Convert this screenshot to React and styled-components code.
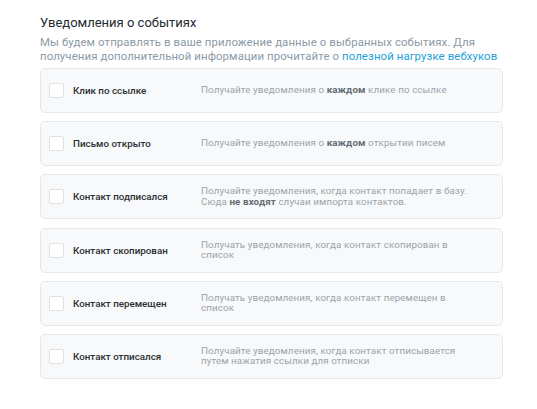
import React from "react";
import styled, { createGlobalStyle } from "styled-components";

const Global = createGlobalStyle`
  html, body { margin: 0; padding: 0; background: #ffffff; }
  body { font-family: Roboto, "Noto Sans", Arial, sans-serif; -webkit-font-smoothing: antialiased; }
`;

const Page = styled.div`
  width: 463px;
  padding: 15px 0 0 40px;
`;

const Title = styled.h2`
  margin: 0;
  font-size: 13px;
  font-weight: 400;
  color: #222a30;
  line-height: 16px;
`;

const Intro = styled.p`
  margin: 5px 0 5px;
  font-size: 11.4px;
  line-height: 13.5px;
  color: #8b9aa6;
  letter-spacing: 0.1px;
`;

const Link = styled.a`
  color: #1ea0d6;
  text-decoration: none;
`;

const List = styled.div`
  display: flex;
  flex-direction: column;
  gap: 8.2px;
`;

const Card = styled.label`
  display: flex;
  align-items: center;
  height: 45px;
  box-sizing: border-box;
  padding: 0 10px 0 8px;
  background: #f7f9fa;
  border: 1px solid #e5e8ea;
  border-radius: 5px;
`;

const Box = styled.span`
  flex: none;
  width: 13px;
  height: 13px;
  border: 1px solid #dde1e4;
  border-radius: 2px;
  background: #ffffff;
`;

const Name = styled.span`
  flex: none;
  width: 128px;
  margin-left: 9px;
  font-size: 9.8px;
  font-weight: 500;
  color: #2a2e31;
`;

const Desc = styled.span`
  font-size: 9.8px;
  line-height: 10.5px;
  color: #9ba4aa;
  max-width: 272px;
  letter-spacing: 0.1px;

  b {
    font-weight: 700;
    color: #656d72;
  }
`;

const items = [
  { name: "Клик по ссылке", desc: <>Получайте уведомления о <b>каждом</b> клике по ссылке</> },
  { name: "Письмо открыто", desc: <>Получайте уведомления о <b>каждом</b> открытии писем</> },
  { name: "Контакт подписался", desc: <>Получайте уведомления, когда контакт попадает в базу. Сюда <b>не входят</b> случаи импорта контактов.</> },
  { name: "Контакт скопирован", desc: <>Получать уведомления, когда контакт скопирован в список</> },
  { name: "Контакт перемещен", desc: <>Получать уведомления, когда контакт перемещен в список</> },
  { name: "Контакт отписался", desc: <>Получайте уведомления, когда контакт отписывается путем нажатия ссылки для отписки</> },
];

export default function App() {
  return (
    <>
      <Global />
      <Page>
        <Title>Уведомления о событиях</Title>
        <Intro>
          Мы будем отправлять в ваше приложение данные о выбранных событиях. Для получения дополнительной информации прочитайте о{" "}
          <Link href="#">полезной нагрузке вебхуков</Link>
        </Intro>
        <List>
          {items.map((it) => (
            <Card key={it.name}>
              <Box />
              <Name>{it.name}</Name>
              <Desc>{it.desc}</Desc>
            </Card>
          ))}
        </List>
      </Page>
    </>
  );
}
